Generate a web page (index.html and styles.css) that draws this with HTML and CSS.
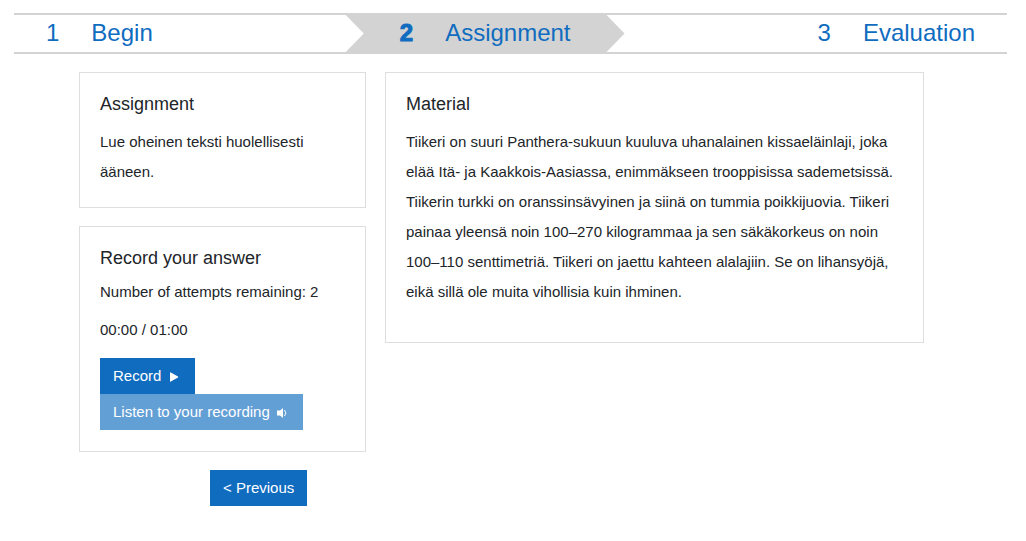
FILE: index.html
```html
<!DOCTYPE html>
<html lang="en">
<head>
<meta charset="utf-8">
<title>Assignment</title>
<link rel="stylesheet" href="styles.css">
</head>
<body>
<nav aria-label="Progress">
  <ol class="steps">
    <li class="step"><span class="step-number">1</span><span>Begin</span></li>
    <li class="step step-current" aria-current="step"><span class="step-number">2</span><span>Assignment</span></li>
    <li class="step"><span class="step-number">3</span><span>Evaluation</span></li>
  </ol>
</nav>
<main class="content">
  <div class="column">
    <section class="card">
      <h2 class="card-title">Assignment</h2>
      <p class="prose" lang="fi">Lue oheinen teksti huolellisesti ääneen.</p>
    </section>
    <section class="card">
      <h2 class="card-title">Record your answer</h2>
      <p class="attempts">Number of attempts remaining: 2</p>
      <p class="timer">00:00 / 01:00</p>
      <div class="actions">
        <button class="button" type="button">Record
          <svg class="icon" viewBox="0 0 10 10" aria-hidden="true"><path d="M1 .8Q1 0 1.800 .4L9 4.400Q9.600 5 9 5.600L1.800 9.600Q1 10 1 9.200Z"/></svg>
        </button>
        <button class="button" type="button" disabled>Listen to your recording
          <svg class="icon" viewBox="0 0 10 10" aria-hidden="true"><path d="M0 2.500H3L6 0V10L3 7.500H0Z"/><path class="wave" d="M7.500 2Q10.300 5 7.500 8"/></svg>
        </button>
      </div>
    </section>
    <div class="pager"><button class="button" type="button">&lt; Previous</button></div>
  </div>
  <section class="card material">
    <h2 class="card-title">Material</h2>
    <p class="prose" lang="fi">Tiikeri on suuri Panthera-sukuun kuuluva uhanalainen kissaeläinlaji, joka elää Itä- ja Kaakkois-Aasiassa, enimmäkseen trooppisissa sademetsissä. Tiikerin turkki on oranssinsävyinen ja siinä on tummia poikkijuovia. Tiikeri painaa yleensä noin 100–270 kilogrammaa ja sen säkäkorkeus on noin 100–110 senttimetriä. Tiikeri on jaettu kahteen alalajiin. Se on lihansyöjä, eikä sillä ole muita vihollisia kuin ihminen.</p>
  </section>
</main>
</body>
</html>
```

FILE: styles.css
```css
* {
  box-sizing: border-box;
}

body {
  margin: 0;
  padding: 13px 19px 13px 14px;
  background: #fff;
  color: #212529;
  font: 15px/22px "Liberation Sans", Arial, sans-serif;
}

.steps {
  display: flex;
  justify-content: space-between;
  margin: 0;
  padding: 0;
  border-top: 2px solid #d3d3d3;
  border-bottom: 2px solid #d3d3d3;
  list-style: none;
  color: #0f6cbf;
  font-size: 24px;
  line-height: 35px;
}

.step {
  display: flex;
  gap: 32px;
  padding: 0 32px 2px;
}

.step-current {
  padding: 0 54px 2px;
  background: #d3d3d3;
  clip-path: polygon(0 0, calc(100% - 18px) 0, 100% 50%, calc(100% - 18px) 100%, 0 100%, 18px 50%);
}

.step-current .step-number {
  font-weight: 900;
  -webkit-text-stroke: 1px #0f6cbf;
}

.content {
  display: grid;
  grid-template-columns: 287fr 539fr;
  align-items: start;
  gap: 19px;
  margin: 18px 83px 0 65px;
}

.column {
  display: grid;
  gap: 18px;
}

.card {
  padding: 20px;
  border: 1px solid #dedede;
}

.card-title {
  margin: 0 0 12px;
  font-size: 18px;
  font-weight: 400;
  line-height: 22px;
}

.prose {
  margin: 0;
  line-height: 30px;
}

.attempts {
  margin: 0 0 16px;
}

.timer {
  margin: 0 0 17px;
}

.material {
  padding-bottom: 35px;
}

.actions {
  display: grid;
  justify-items: start;
  padding-bottom: 1px;
}

.button {
  padding: 7px 13px;
  border: 0;
  background: #0f6cbf;
  color: #fff;
  font: inherit;
}

.button:disabled {
  opacity: 0.65;
}

.icon {
  width: 10px;
  height: 10px;
  margin: 0 3px;
  vertical-align: -1px;
  fill: #fff;
}

.wave {
  fill: none;
  stroke: #fff;
  stroke-width: 1;
}

.pager {
  margin-left: 131px;
}
```
